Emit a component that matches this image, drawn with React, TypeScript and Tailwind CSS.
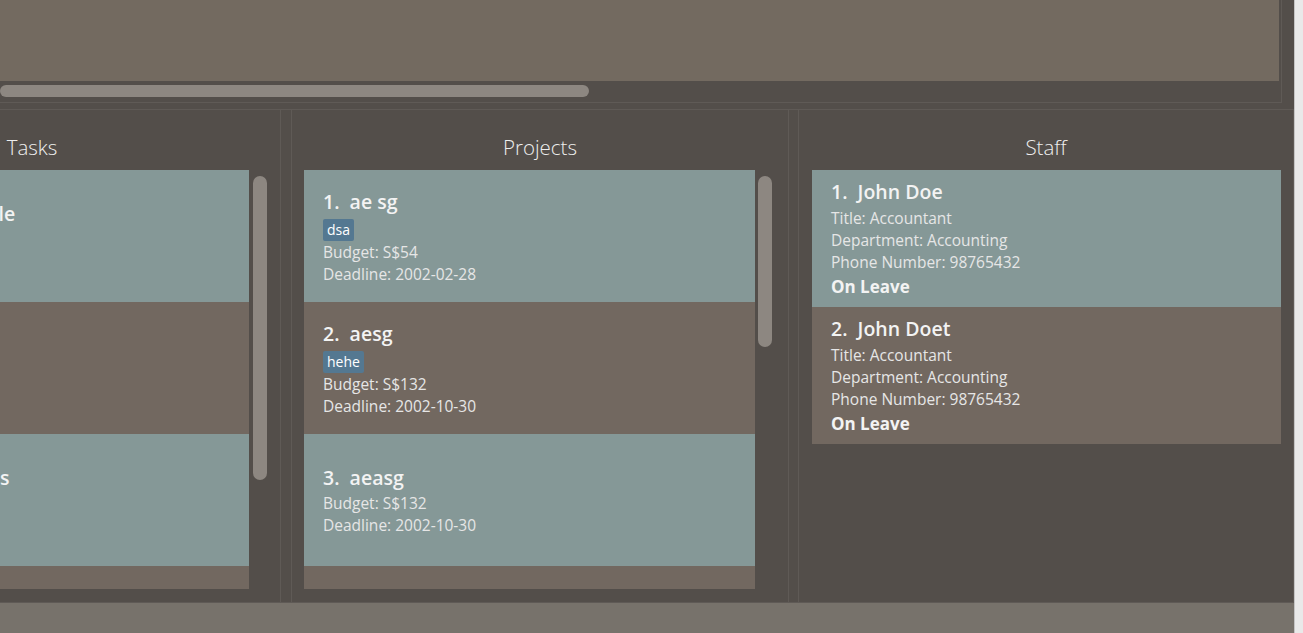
import { ReactNode } from "react";

type Tone = "teal" | "brown";

const tasks = [
  { title: "Organise schedule", tone: "teal" as Tone, lines: ["Project: ae sg", "Deadline: 2002-02-28"] },
  { title: "Call", tone: "brown" as Tone, lines: ["Project: aesg", "Deadline: 2002-10-30"] },
  { title: "Update the tables", tone: "teal" as Tone, lines: ["Project: aeasg", "Deadline: 2002-10-30"] },
  { title: "Plan", tone: "brown" as Tone, lines: ["Project: aesg", "Deadline: 2002-11-02"] },
];

const projects = [
  { name: "ae sg", tag: "dsa", budget: "S$54", deadline: "2002-02-28", tone: "teal" as Tone },
  { name: "aesg", tag: "hehe", budget: "S$132", deadline: "2002-10-30", tone: "brown" as Tone },
  { name: "aeasg", budget: "S$132", deadline: "2002-10-30", tone: "teal" as Tone },
  { name: "asg", budget: "S$12", deadline: "2002-11-01", tone: "brown" as Tone },
];

const staff = [
  { name: "John Doe", tone: "teal" as Tone },
  { name: "John Doet", tone: "brown" as Tone },
];

const toneBg = { teal: "bg-[#859897]", brown: "bg-[#726860]" };

function Panel({ title, className, children }: { title: string; className: string; children: ReactNode }) {
  return (
    <div className={`h-full shrink-0 border-x border-[#5f5a56] flex flex-col ${className}`}>
      <div className="h-[60px] pt-[22px] text-center text-[20.5px] leading-[30px] font-light text-[#eeeeee]">{title}</div>
      {children}
    </div>
  );
}

function Thumb({ height }: { height: string }) {
  return <div className={`w-[14px] rounded-full bg-[#8d8781] ${height}`} />;
}

const App = () => {
  return (
    <div className="h-[633px] w-[1303px] flex overflow-hidden bg-[#e9e9e9] font-['Open_Sans',sans-serif]">
      <div className="w-[1294px] shrink-0 flex flex-col bg-[#534e4a] overflow-hidden">
        {/* result box, scrolled sideways */}
        <div className="h-[103px] w-[1282px] border-r border-b border-[#5f5a56] flex flex-col">
          <div className="h-[81px] w-[1279px] bg-[#736a60]" />
          <div className="pt-[4px]">
            <div className="h-[12px] w-[589px] rounded-full bg-[#8d8781]" />
          </div>
        </div>

        <div className="h-[6px]" />

        <div className="flex h-[494px] w-[1294px] border-y border-[#5f5a56]">
          {/* Tasks */}
          <Panel title="Tasks" className="w-[498px] ml-[-217px]">
            <div className="flex h-[419px] pl-[12px] pr-[12px]">
              <div className="w-[453px] overflow-hidden">
                {tasks.map((t, i) => (
                  <div key={i} className={`h-[132px] px-[19px] flex flex-col justify-center ${toneBg[t.tone]}`}>
                    <div className="whitespace-pre text-[19.5px] leading-[28px] font-semibold text-[#f3f3f3]">{`${i + 1}.  ${t.title}`}</div>
                    {t.lines.map((l) => (
                      <div key={l} className="text-[15.5px] leading-[22px] text-[#e6e6e6]">{l}</div>
                    ))}
                  </div>
                ))}
              </div>
              <div className="pl-[4px] pt-[6px]">
                <Thumb height="h-[304px]" />
              </div>
            </div>
          </Panel>

          {/* Projects */}
          <Panel title="Projects" className="w-[498px] ml-[10px]">
            <div className="flex h-[419px] pl-[12px] pr-[16px]">
              <div className="w-[451px] overflow-hidden">
                {projects.map((p, i) => (
                  <div key={i} className={`h-[132px] px-[19px] flex flex-col justify-center ${toneBg[p.tone]}`}>
                    <div className="whitespace-pre text-[19.5px] leading-[28px] font-semibold text-[#f3f3f3]">{`${i + 1}.  ${p.name}`}</div>
                    {p.tag && (
                      <div className="mt-[3px] flex">
                        <span className="h-[22px] px-[4px] rounded-[2px] bg-[#547891] text-[14px] leading-[22px] text-white">{p.tag}</span>
                      </div>
                    )}
                    <div className="text-[15.5px] leading-[22px] text-[#e6e6e6]">Budget: {p.budget}</div>
                    <div className="text-[15.5px] leading-[22px] text-[#e6e6e6]">Deadline: {p.deadline}</div>
                  </div>
                ))}
              </div>
              <div className="pl-[3px] pt-[6px]">
                <Thumb height="h-[171px]" />
              </div>
            </div>
          </Panel>

          {/* Staff */}
          <Panel title="Staff" className="w-[496px] ml-[9px]">
            <div className="h-[419px] pl-[13px] pr-[12px]">
              {staff.map((s, i) => (
                <div key={i} className={`pt-[8px] pb-[6px] px-[19px] ${toneBg[s.tone]}`}>
                  <div className="whitespace-pre text-[19.5px] leading-[28px] font-semibold text-[#f3f3f3]">{`${i + 1}.  ${s.name}`}</div>
                  <div className="mt-[1px] text-[15.5px] leading-[22px] text-[#e6e6e6]">
                    <div>Title: Accountant</div>
                    <div>Department: Accounting</div>
                    <div>Phone Number: 98765432</div>
                  </div>
                  <div className="text-[17px] leading-[28px] font-bold text-[#f3f3f3]">On Leave</div>
                </div>
              ))}
            </div>
          </Panel>
        </div>

        <div className="h-[30px] bg-[#77726b]" />
      </div>
      <div className="w-[9px] shrink-0 border-l border-[#c4c4c4]" />
    </div>
  );
};

export default App;
